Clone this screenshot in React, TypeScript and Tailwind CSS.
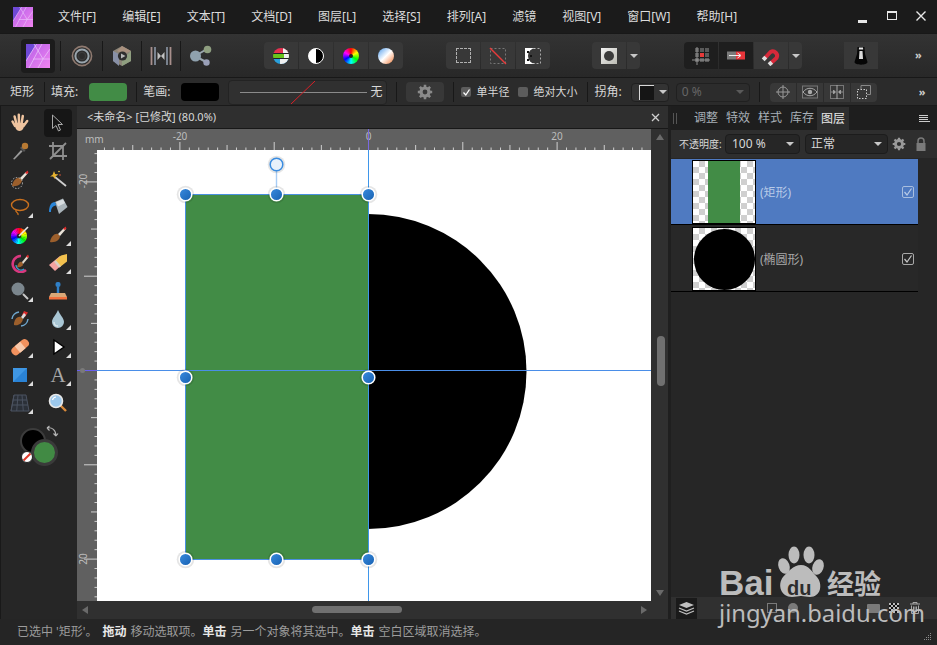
import React from "react";

const Logo = ({ s = 20, id }: { s?: number; id: string }) => (
  <svg width={s} height={s} viewBox="0 0 24 24">
    <defs>
      <linearGradient id={id} x1="0" y1="0" x2="1" y2="1">
        <stop offset="0" stopColor="#b45ee8" />
        <stop offset="1" stopColor="#f184f0" />
      </linearGradient>
    </defs>
    <rect width="24" height="24" fill={`url(#${id})`} />
    <path d="M0 0H10.5L0 17Z" fill="#6f49d6" />
    <path d="M0 17L10.5 0M8 0L17 15M24 15H7M3 24L12 7L16 0M24 5L17 15L12 24" stroke="#e9bdf9" strokeWidth="0.9" fill="none" opacity="0.9" />
  </svg>
);

const Caret = ({ c = "#c8c8c8" }: { c?: string }) => (
  <span className="block h-0 w-0 border-x-[4px] border-t-[4px] border-x-transparent" style={{ borderTopColor: c }} />
);

const Sep = ({ h = "h-[22px]" }: { h?: string }) => <span className={`${h} w-px shrink-0 bg-[#181818]`} />;

const Gear = ({ s = 16, c = "#8a8a8a" }: { s?: number; c?: string }) => (
  <svg width={s} height={s} viewBox="0 0 20 20">
    <circle cx="10" cy="10" r="5" fill="none" stroke={c} strokeWidth="4" />
    <path d="M10 1V19M1 10H19M3.6 3.6L16.4 16.4M16.4 3.6L3.6 16.4" stroke={c} strokeWidth="3.2" strokeDasharray="3.4 11.4" />
  </svg>
);

const Btn = ({ w = "w-[34px]", dark, children }: { w?: string; dark?: boolean; children?: React.ReactNode }) => (
  <div className={`flex h-[27px] ${w} items-center justify-center ${dark ? "bg-[#1e1e1e]" : "bg-[#383838]"}`}>{children}</div>
);

function wedges(cx: number, cy: number, r: number, n = 24) {
  const out: React.ReactNode[] = [];
  for (let i = 0; i < n; i++) {
    const a0 = (i / n) * Math.PI * 2 - Math.PI / 2;
    const a1 = ((i + 1.15) / n) * Math.PI * 2 - Math.PI / 2;
    out.push(
      <path
        key={i}
        d={`M${cx} ${cy}L${cx + r * Math.cos(a0)} ${cy + r * Math.sin(a0)}A${r} ${r} 0 0 1 ${cx + r * Math.cos(a1)} ${cy + r * Math.sin(a1)}Z`}
        fill={`hsl(${(i / n) * 360} 100% 50%)`}
      />
    );
  }
  return out;
}

const I = ({ children }: { children: React.ReactNode }) => (
  <svg width="20" height="20" viewBox="0 0 20 20">
    {children}
  </svg>
);

const brush = (
  <>
    <path d="M2 17C3 11 7 8 10 9L12 11C12 15 7 18 2 17Z" fill="#9c5f2c" />
    <path d="M10 9L16 3L18 4L12 11Z" fill="#e9e2d8" />
    <path d="M15 4L17.5 1.5L18.5 3.5L17 5Z" fill="#e02a2a" />
  </>
);

const tools: { n: React.ReactNode; t?: boolean; sel?: boolean }[] = [
  { n: <I><path d="M5 13L2.5 8.5M6.5 11L4.6 3.5M9 10.5L8.8 1.8M11.5 11L12.8 3M13.5 13L17.2 8" stroke="#efc49f" strokeWidth="2.5" strokeLinecap="round" /><path d="M4.5 10H14L13.5 15C12 19 7 19 5.5 15Z" fill="#efc49f" /></I> },
  { sel: true, n: <I><path d="M4.5 2V15.5L8 12.5L10.5 18L12.5 17L10 11.5H14.5Z" fill="#151515" stroke="#a8a8a8" strokeWidth="1" /></I> },
  { n: <I><path d="M3 18L11 9L12.5 10.5L4.5 18.5Z" fill="#9a9a9a" /><path d="M10 7L14 11L15.5 9.5L11.5 5.5Z" fill="#555" /><circle cx="15" cy="5" r="3.2" fill="#b87a33" /></I> },
  { n: <I><path d="M5 1V15H19M1 5H15V19M2 18L18 2" stroke="#8f8f8f" strokeWidth="1.8" fill="none" /></I> },
  { n: <I>{brush}<circle cx="7" cy="14" r="5.5" fill="none" stroke="#ccc" strokeWidth="0.8" strokeDasharray="1.5 1.5" /></I> },
  { n: <I><path d="M7 8L18 17" stroke="#cfcfcf" strokeWidth="1.8" /><path d="M6 2L7.2 5L10.5 5.5L7.6 7.2L7 10L5 7.6L2 7.5L4.6 5.7Z" fill="#e7b32e" /><circle cx="11" cy="2.5" r="0.8" fill="#f2c94c" /><circle cx="12" cy="6" r="0.8" fill="#e05a3a" /></I> },
  { t: true, n: <I><ellipse cx="10" cy="8" rx="8.5" ry="5.5" fill="none" stroke="#c9701e" strokeWidth="1.4" /><path d="M6 13C5 16 9 15 8 18" fill="none" stroke="#c9701e" strokeWidth="1.4" /></I> },
  { n: <I><path d="M7 5L15 1.5L19.5 10L11 17Z" fill="#a9b3b9" /><path d="M8 5L15 2.5L17 6L10 9.5Z" fill="#d8dde0" /><path d="M7 5C3 5 1 9 1 15L3 15C3 11 5 8.5 8.5 8.5Z" fill="#2a86d8" /></I> },
  { n: <I><g>{wedges(9, 11, 8)}</g><circle cx="9" cy="11" r="2.2" fill="#222" /><path d="M9 11L18 2" stroke="#e8e8e8" strokeWidth="1.6" /></I> },
  { t: true, n: <I>{brush}</I> },
  { n: <I><path d="M11 3A8 8 0 1 0 16 17" fill="none" stroke="#d8387e" strokeWidth="2.6" /><path d="M6 12A5 5 0 0 0 14 16" fill="none" stroke="#3aa0d0" strokeWidth="1.2" /><path d="M7 14C8 10 10 8 12 9L13 11C13 13 10 15 7 14Z" fill="#9c5f2c" /><path d="M12 9L17 3L18.5 4.5L13 11Z" fill="#e2d9cc" /><path d="M16 3.5L18 1.5L19 3.5L18 5Z" fill="#e02a2a" /></I> },
  { t: true, n: <I><path d="M1 12L12 3L17 9L7 18Z" fill="#f3a3a0" /><path d="M7 8L13 2.5L19 1V8.5L12 14Z" fill="#f2c14e" /><path d="M7 8L12 14" stroke="#d8d0c4" strokeWidth="2.5" /></I> },
  { t: true, n: <I><circle cx="8" cy="8" r="6.5" fill="#7b868d" /><path d="M13 13L18 18" stroke="#c9c9c9" strokeWidth="2" /></I> },
  { n: <I><rect x="7.5" y="1" width="5" height="5" rx="2" fill="#2f7fc6" /><rect x="8.8" y="6" width="2.4" height="6" fill="#2f7fc6" /><path d="M3 12H17L19 16H1Z" fill="#d9a878" /><rect x="1" y="16" width="18" height="2.5" fill="#f2703d" /></I> },
  { n: <I><path d="M14 2L18 3.5L15 8L12 6Z" fill="#d92a2a" /><path d="M4 14C5 9 8 7 11 8L13 10C12 15 8 17 4 16Z" fill="#9c5f2c" /><path d="M11 8L14 4L16 6L13 10Z" fill="#ddd" /><path d="M2 10A8 8 0 0 1 9 3M18 10A8 8 0 0 1 11 17" fill="none" stroke="#6fa6cc" strokeWidth="1.5" /></I> },
  { t: true, n: <I><path d="M10 1C12 6 16 9 16 13A6 6 0 0 1 4 13C4 9 8 6 10 1Z" fill="#a9c6d4" /><path d="M6 13C6 16 8 17 10 17" stroke="#dbe8ee" strokeWidth="1.3" fill="none" /></I> },
  { t: true, n: <I><rect x="0" y="6" width="20" height="8.5" rx="4" transform="rotate(-40 10 10)" fill="#f2925e" /><rect x="6.5" y="6" width="7" height="8.5" transform="rotate(-40 10 10)" fill="#f8c9ab" /></I> },
  { t: true, n: <I><path d="M6 3V17L16 10Z" fill="#fff" stroke="#000" strokeWidth="1.4" /></I> },
  { t: true, n: <I><rect x="3" y="3" width="14" height="14" fill="#2a83d6" /><path d="M3 3H17L3 17Z" fill="#3f97e4" /></I> },
  { t: true, n: <span className="font-['Liberation_Serif',serif] text-[21px] leading-none text-[#a8a8a8]">A</span> },
  { t: true, n: <I><path d="M4 2H16L19 18H1Z M4 2L1 18M8 2L6.7 18M12 2L13.3 18M3 7H17M2 12H18" fill="#2b3038" stroke="#4b5260" strokeWidth="1" /></I> },
  { n: <I><path d="M12 12L18 18" stroke="#d98a3a" strokeWidth="2.4" /><circle cx="8" cy="8" r="6.5" fill="#9cc8ec" stroke="#e8e8e8" strokeWidth="1.6" /><path d="M4.5 7A4 4 0 0 1 8 4" stroke="#fff" strokeWidth="1.2" fill="none" /></I> },
];

const Tools = () => (
  <aside className="flex w-[77px] shrink-0 flex-col border-l border-[#191919] bg-[#262626] pl-[5px] pt-[3px]">
    <div className="grid grid-cols-[28px_28px] gap-x-[10px]">
      {tools.map((t, i) => (
        <div key={i} className={`relative flex h-[28px] items-center justify-center rounded-sm ${t.sel ? "bg-[#161616]" : ""}`}>
          {t.n}
          {t.t && <span className="absolute bottom-[3px] right-[1px] h-0 w-0 border-b-[5px] border-l-[5px] border-b-[#dcdcdc] border-l-transparent" />}
        </div>
      ))}
    </div>
    <div className="relative ml-[14px] mt-[11px] h-[46px] w-[46px] self-start">
      <span className="absolute left-0 top-0 h-[26px] w-[26px] rounded-full border-2 border-[#3c3c3c] bg-black" />
      <span className="absolute left-[11px] top-[11px] h-[27px] w-[27px] rounded-full border-[3px] border-[#3a3a3a] bg-[#418a44]" />
      <span className="absolute left-[1px] top-[23px] flex h-[12px] w-[12px] items-center justify-center overflow-hidden rounded-full border border-[#222] bg-white">
        <span className="h-[2px] w-[14px] -rotate-45 bg-[#e0392b]" />
      </span>
      <svg className="absolute left-[25px] top-[-3px]" width="14" height="14" viewBox="0 0 14 14">
        <path d="M2 3C7 2 11 5 11 11M2 3L4.5 1M2 3L4.5 5.5M11 11L8.5 8.5M11 11L13 8.5" fill="none" stroke="#b5b5b5" strokeWidth="1.1" />
      </svg>
    </div>
  </aside>
);

const Canvas = () => {
  const hTicks: React.ReactNode[] = [];
  for (let i = -30; i <= 30; i++) {
    const x = 368.5 + i * 9.43 - 77;
    if (x < 20 || x > 574) continue;
    hTicks.push(<path key={i} d={`M${x} ${21}V${i % 10 === 0 ? 13 : i % 5 === 0 ? 16 : 18.5}`} stroke="#ddd" strokeWidth="0.9" />);
  }
  const vTicks: React.ReactNode[] = [];
  for (let i = -25; i <= 25; i++) {
    const y = 370.5 + i * 9.43 - 129;
    if (y < 21) continue;
    vTicks.push(<path key={i} d={`M20 ${y}H${i % 10 === 0 ? 7 : i % 5 === 0 ? 14 : 17.5}`} stroke="#ddd" strokeWidth="0.9" />);
  }
  const handles = [[108.5, 65.5], [199.5, 65.5], [291.5, 65.5], [108.5, 248.5], [291.5, 248.5], [108.5, 430.5], [199.5, 430.5], [291.5, 430.5]];
  return (
    <svg className="block h-[472px] w-[574px]" viewBox="0 0 574 472">
      <defs>
        <linearGradient id="hd" x1="0" y1="0" x2="1" y2="1">
          <stop offset="0" stopColor="#3a8ce0" />
          <stop offset="1" stopColor="#1660b0" />
        </linearGradient>
      </defs>
      <rect width="574" height="472" fill="#606060" />
      <rect x="20" y="21" width="554" height="451" fill="#fff" />
      {hTicks}
      {vTicks}
      <text x="8" y="14" fontSize="10" fill="#bdbdbd" fontFamily="Noto Sans">mm</text>
      <text x="103" y="11" fontSize="10" fill="#bdbdbd" textAnchor="middle" fontFamily="Noto Sans">-20</text>
      <text x="291.5" y="11" fontSize="10" fill="#bdbdbd" textAnchor="middle" fontFamily="Noto Sans">0</text>
      <text x="480" y="11" fontSize="10" fill="#bdbdbd" textAnchor="middle" fontFamily="Noto Sans">20</text>
      <text transform="translate(10 52) rotate(-90)" fontSize="10" fill="#bdbdbd" textAnchor="middle" fontFamily="Noto Sans">-20</text>
      <text transform="translate(10 430) rotate(-90)" fontSize="10" fill="#bdbdbd" textAnchor="middle" fontFamily="Noto Sans">20</text>
      <path d="M291 85A158.5 157.5 0 0 1 291 400Z" fill="#000" />
      <rect x="108.5" y="65.5" width="183" height="365" fill="#428c46" stroke="#4a90e0" strokeWidth="1" />
      <path d="M291.5 0V472" stroke="#3f96ea" strokeWidth="1" />
      <path d="M291.5 0V21" stroke="#7a6ae0" strokeWidth="1" />
      <path d="M0 241.5H574" stroke="#4a8ee8" strokeWidth="1" />
      <path d="M0 241.5H20" stroke="#6a5ff0" strokeWidth="1" />
      <circle cx="5.5" cy="241.5" r="2.5" fill="#7a7a7a" />
      <path d="M199.5 36V65" stroke="#a8cdf5" strokeWidth="1.4" />
      {handles.map(([x, y], i) => (
        <g key={i}>
          <circle cx={x} cy={y} r="8.8" fill="#000" opacity="0.1" />
          <circle cx={x} cy={y} r="6.3" fill="url(#hd)" stroke="#fff" strokeWidth="1.5" />
        </g>
      ))}
      <circle cx="199.5" cy="35.5" r="8.8" fill="#000" opacity="0.1" />
      <circle cx="199.5" cy="35.5" r="6.3" fill="#e8f1fb" stroke="#3a8ce0" strokeWidth="1.5" />
    </svg>
  );
};

const Menu = ["文件[F]", "编辑[E]", "文本[T]", "文档[D]", "图层[L]", "选择[S]", "排列[A]", "滤镜", "视图[V]", "窗口[W]", "帮助[H]"];

export default function App() {
  return (
    <div className="relative flex h-[645px] w-[937px] flex-col overflow-hidden bg-[#262626] font-['Noto_Sans','Noto_Sans_CJK_SC',sans-serif] text-[12px] text-[#d0d0d0]">
      {/* menu */}
      <header className="flex h-[33px] shrink-0 items-center bg-[#1b1b1b] pl-[13px]">
        <Logo id="lg1" />
        <nav className="ml-[25px] flex gap-[26px] text-[#dcdcdc]">
          {Menu.map((m) => (
            <span key={m}>{m}</span>
          ))}
        </nav>
        <div className="ml-auto flex items-center pr-[11px]">
          <span className="mt-[10px] h-[3px] w-[9px] bg-[#e8e8e8]" />
          <span className="mb-[2px] ml-[20px] h-[9px] w-[10px] border border-t-[2px] border-[#e8e8e8]" />
          <svg width="10" height="10" viewBox="0 0 10 10" className="mb-[2px] ml-[19px]"><path d="M.5.5L9.5 9.5M9.5.5L.5 9.5" stroke="#e8e8e8" strokeWidth="1.4" /></svg>
        </div>
      </header>

      {/* main toolbar */}
      <div className="flex h-[45px] shrink-0 items-center border-y border-[#181818] bg-linear-to-b from-[#333333] to-[#282828] pl-[21px]">
        <div className="flex h-[34px] w-[34px] items-center justify-center rounded-sm bg-[#1c1c1c]"><Logo s={24} id="lg2" /></div>
        <span className="ml-[5px] mr-[10px]"><Sep h="h-[30px] block" /></span>
        <svg width="22" height="22" viewBox="0 0 22 22"><circle cx="11" cy="11" r="9.6" fill="none" stroke="#8f7a70" strokeWidth="1.6" /><circle cx="11" cy="11" r="6.6" fill="none" stroke="#9aa6ae" strokeWidth="2" /><circle cx="11" cy="11" r="3.6" fill="none" stroke="#3c3c3c" strokeWidth="1.4" /></svg>
        <span className="ml-[9px] mr-[8px]"><Sep h="h-[30px] block" /></span>
        <svg width="22" height="22" viewBox="0 0 22 22"><path d="M11 1L20 6V16L11 21L2 16V6Z" fill="#8c8578" /><path d="M11 1L20 6L13 9L6 6Z" fill="#a8907e" /><path d="M2 6L8 9V21L2 16Z" fill="#8890a6" /><path d="M20 6V16L11 21V15Z" fill="#8f9f80" /><circle cx="11.5" cy="11" r="4.6" fill="#2e2e2e" /><path d="M10 8.5L14.5 11L10 13.5Z" fill="#b8b8b8" /></svg>
        <span className="ml-[8px] mr-[8px]"><Sep h="h-[30px] block" /></span>
        <svg width="22" height="22" viewBox="0 0 22 22"><path d="M1.5 2V20" stroke="#a88f8c" strokeWidth="1.8" /><path d="M5 2V20" stroke="#8d98a8" strokeWidth="1.6" /><path d="M20.5 2V20" stroke="#a88f8c" strokeWidth="1.8" /><path d="M17 2V20" stroke="#8d98a8" strokeWidth="1.6" /><path d="M7.5 7L11 11L7.5 15ZM14.5 7L11 11L14.5 15Z" fill="#c2c2c2" /></svg>
        <span className="ml-[8px] mr-[8px]"><Sep h="h-[30px] block" /></span>
        <svg width="24" height="22" viewBox="0 0 24 22"><path d="M6 11L18 4M6 11L17 17" stroke="#9aa5ad" strokeWidth="2" /><circle cx="6.5" cy="11" r="5.5" fill="#8fa1ae" /><circle cx="18.5" cy="4.5" r="3.8" fill="#8f9f80" /><circle cx="17.5" cy="17.5" r="3.2" fill="#9aa0b8" /></svg>

        <div className="ml-[51px] flex gap-px overflow-hidden rounded-sm">
          <Btn>
            <svg width="16" height="16" viewBox="0 0 16 16"><defs><clipPath id="c1"><circle cx="8" cy="8" r="8" /></clipPath></defs><g clipPath="url(#c1)"><rect width="16" height="5" fill="#e6304f" /><rect x="10" width="6" height="5" fill="#f0f0f0" /><rect y="5" width="16" height="1" fill="#222" /><rect y="6" width="16" height="4" fill="#6ac41c" /><rect x="11" y="6" width="5" height="4" fill="#f0f0f0" /><rect y="10" width="16" height="1" fill="#222" /><rect y="11" width="16" height="5" fill="#2aa0dc" /><rect x="7" y="11" width="9" height="5" fill="#f0f0f0" /></g></svg>
          </Btn>
          <Btn><span className="h-[16px] w-[16px] rounded-full border border-white bg-linear-to-r from-white from-50% to-black to-50%" /></Btn>
          <Btn><span className="flex h-[16px] w-[16px] items-center justify-center rounded-full bg-[conic-gradient(#f00,#ff0,#0f0,#0ff,#00f,#f0f,#f00)]"><span className="h-[4px] w-[4px] rounded-full bg-[#222]" /></span></Btn>
          <Btn><span className="h-[16px] w-[16px] rounded-full bg-linear-to-br from-[#4a9ae8] via-white to-[#ea7a30]" /></Btn>
        </div>

        <div className="ml-[43px] flex gap-px overflow-hidden rounded-sm">
          <Btn><span className="h-[15px] w-[15px] border border-dashed border-[#b0b0b0]" /></Btn>
          <Btn><svg width="18" height="18" viewBox="0 0 18 18"><rect x="1.5" y="1.5" width="15" height="15" fill="none" stroke="#777" strokeDasharray="2 2" /><path d="M1 1L17 17" stroke="#e83a3a" strokeWidth="1.5" /></svg></Btn>
          <Btn><svg width="18" height="18" viewBox="0 0 18 18"><rect x="1.5" y="1.5" width="15" height="15" fill="none" stroke="#aaa" strokeDasharray="2 2" /><path d="M1 1H12A8 8 0 0 0 12 17H1Z" fill="#fff" /><path d="M3 4H5V6H3ZM6 8H8V10H6ZM3 12H5V14H3Z" fill="#111" /></svg></Btn>
        </div>

        <div className="ml-[42px] flex gap-px overflow-hidden rounded-sm">
          <Btn><span className="flex h-[16px] w-[16px] items-center justify-center bg-linear-to-br from-[#f2f2f2] to-[#bcbcb4]"><span className="h-[10px] w-[10px] rounded-full bg-[#3a3a3a]" /></span></Btn>
          <Btn w="w-[13px]"><Caret /></Btn>
        </div>

        <div className="ml-[44px] flex gap-px overflow-hidden rounded-sm">
          <Btn dark>
            <svg width="18" height="18" viewBox="0 0 18 18"><g fill="#5a5a5a"><rect x="3" y="1" width="4" height="4" /><rect x="8" y="1" width="4" height="4" /><rect x="13" y="1" width="4" height="4" /><rect x="3" y="6" width="4" height="4" /><rect x="13" y="6" width="4" height="4" /><rect x="3" y="11" width="4" height="4" /><rect x="8" y="11" width="4" height="4" /><rect x="13" y="11" width="4" height="4" /></g><rect x="8" y="6" width="4" height="4" fill="#e83a3a" /><path d="M0 13H18M5 0V18" stroke="#a8a8a8" strokeWidth="0.8" /></svg>
          </Btn>
          <Btn dark>
            <svg width="18" height="9" viewBox="0 0 18 9"><rect x="0" y="0.5" width="9" height="8" fill="#7a7a7a" /><rect x="9" y="0.5" width="9" height="8" fill="#e8353a" /><path d="M2 4.5H13M10.5 2L14 4.5L10.5 7" stroke="#eee" strokeWidth="1" fill="none" /></svg>
          </Btn>
          <Btn>
            <svg width="20" height="20" viewBox="0 0 20 20"><path d="M3.5 12.5L9.5 6A4.4 4.4 0 0 1 15.5 12L9.5 17.5" fill="none" stroke="#d8293a" strokeWidth="4" /><path d="M4.8 11L2.2 13.8M10.8 16.2L8 18.7" stroke="#dedede" strokeWidth="4" /></svg>
          </Btn>
          <Btn w="w-[13px]"><Caret /></Btn>
        </div>

        <div className="ml-[42px]">
          <Btn>
            <svg width="14" height="20" viewBox="0 0 14 20"><path d="M3.5 1H10.5L11 8L13.5 16C13.5 19.5 .5 19.5 .5 16L3 8Z" fill="#060606" /><path d="M5 1.5H9L9.2 3.5H4.8Z" fill="#e8e8e8" /><path d="M5.5 5H8.5L9 13H5Z" fill="#dcdcdc" /></svg>
          </Btn>
        </div>
        <span className="ml-[37px] text-[11px] font-bold text-[#cfcfcf]">»</span>
      </div>

      {/* context bar */}
      <div className="flex h-[28px] shrink-0 items-center border-b border-[#1a1a1a] bg-[#2b2b2b] pl-[10px] pt-px text-[#d8d8d8]">
        <span className="w-[24px]">矩形</span>
        <span className="ml-[10px] mr-[6px]"><Sep h="h-[20px] block" /></span>
        <span>填充:</span>
        <span className="ml-[11px] h-[18px] w-[38px] rounded-sm bg-[#428c46]" />
        <span className="ml-[9px] mr-[6px]"><Sep h="h-[20px] block" /></span>
        <span>笔画:</span>
        <span className="ml-[11px] h-[18px] w-[38px] rounded-sm bg-black" />
        <div className="relative ml-[9px] flex h-[25px] w-[159px] items-center rounded-sm border border-[#232323] bg-[#303030] pl-[11px]">
          <span className="h-px w-[127px] bg-[#8a8a8a]" />
          <span className="ml-[3px]">无</span>
          <svg className="absolute left-[61px] top-0" width="26" height="24" viewBox="0 0 26 24"><path d="M1 23L25 0" stroke="#d81f26" strokeWidth="1" /></svg>
        </div>
        <span className="ml-[9px] mr-[9px]"><Sep h="h-[20px] block" /></span>
        <div className="flex h-[20px] w-[38px] items-center justify-center rounded-sm bg-[#383838]"><Gear /></div>
        <span className="ml-[9px] mr-[7px]"><Sep h="h-[20px] block" /></span>
        <span className="flex h-[10px] w-[10px] items-center justify-center rounded-[2px] bg-[#5c5c5c]">
          <svg width="9" height="9" viewBox="0 0 9 9"><path d="M1.5 4.5L3.8 7L7.5 1.5" stroke="#fff" strokeWidth="1.3" fill="none" /></svg>
        </span>
        <span className="ml-[5px] text-[11px]">单半径</span>
        <span className="ml-[9px] h-[10px] w-[10px] rounded-[2px] bg-[#5c5c5c]" />
        <span className="ml-[5px] text-[11px]">绝对大小</span>
        <span className="ml-[10px] mr-[6px]"><Sep h="h-[20px] block" /></span>
        <span>拐角:</span>
        <div className="ml-[9px] flex h-[19px] w-[38px] items-center rounded-sm border border-[#202020] bg-[#333333] pl-[7px]">
          <span className="h-[15px] w-[15px] border-l border-t border-[#d8d8d8] bg-[#151515]" />
          <span className="ml-[5px] flex"><Caret /></span>
        </div>
        <div className="ml-[7px] flex h-[19px] w-[74px] items-center justify-between rounded-sm border border-[#202020] bg-[#2c2c2c] pl-[5px] pr-[5px] text-[#666]">
          <span>0 %</span>
          <Caret c="#5a5a5a" />
        </div>
        <span className="ml-[9px] mr-[10px]"><Sep h="h-[20px] block" /></span>
        <div className="flex gap-px overflow-hidden rounded-sm">
          <div className="flex h-[19px] w-[26px] items-center justify-center bg-[#383838]"><svg width="16" height="16" viewBox="0 0 16 16"><circle cx="8" cy="8" r="5" fill="none" stroke="#999" /><path d="M8 1V15M1 8H15" stroke="#999" /></svg></div>
          <div className="flex h-[19px] w-[26px] items-center justify-center bg-[#383838]"><svg width="18" height="14" viewBox="0 0 18 14"><rect x="1.5" y="1" width="15" height="12" fill="none" stroke="#777" /><path d="M2 7C6 2 12 2 16 7C12 12 6 12 2 7Z" fill="none" stroke="#aaa" /><circle cx="9" cy="7" r="2.2" fill="#aaa" /></svg></div>
          <div className="flex h-[19px] w-[26px] items-center justify-center bg-[#383838]"><svg width="16" height="16" viewBox="0 0 16 16"><rect x="1.5" y="1.5" width="13" height="13" fill="none" stroke="#777" /><path d="M8 1V15" stroke="#aaa" /><path d="M2 8H6M6.5 8L4.5 6V10ZM14 8H10M9.5 8L11.5 6V10Z" stroke="#aaa" fill="#aaa" strokeWidth=".7" /></svg></div>
          <div className="flex h-[19px] w-[26px] items-center justify-center bg-[#383838]"><svg width="16" height="16" viewBox="0 0 16 16"><rect x="1.5" y="5.5" width="9" height="9" fill="none" stroke="#ccc" strokeDasharray="1.5 1.5" /><path d="M5 5V1.5H14.5V10.5H11" fill="none" stroke="#888" /></svg></div>
        </div>
        <span className="ml-[42px] text-[11px] font-bold text-[#cfcfcf]">»</span>
      </div>

      {/* work area */}
      <div className="flex min-h-0 flex-1">
        <Tools />

        {/* document */}
        <section className="flex w-[591px] shrink-0 flex-col bg-[#1e1e1e]">
          <div className="flex h-[23px] shrink-0 items-center justify-between border-b border-[#181818] bg-[#2f2f2f] pl-[10px] pr-[8px] text-[11px] text-[#d8d8d8]">
            <span>&lt;未命名&gt; [已修改] (80.0%)</span>
            <svg width="9" height="9" viewBox="0 0 9 9"><path d="M1 1L8 8M8 1L1 8" stroke="#cfcfcf" strokeWidth="1.3" /></svg>
          </div>
          <div className="flex min-h-0 flex-1">
            <Canvas />
            <div className="relative flex w-[17px] flex-col items-center justify-between bg-[#303030] py-[5px]">
              <span className="h-0 w-0 border-x-[4px] border-b-[6px] border-x-transparent border-b-[#6a6a6a]" />
              <span className="absolute left-[6px] top-[207px] h-[50px] w-[8px] rounded-full bg-[#707070]" />
              <span className="h-0 w-0 border-x-[4px] border-t-[6px] border-x-transparent border-t-[#6a6a6a]" />
            </div>
          </div>
          <div className="relative flex h-[18px] shrink-0 items-center justify-between bg-[#303030] pl-[5px] pr-[21px]">
            <span className="h-0 w-0 border-y-[4px] border-r-[6px] border-y-transparent border-r-[#6a6a6a]" />
            <span className="absolute left-[235px] top-[5px] h-[7px] w-[90px] rounded-full bg-[#707070]" />
            <span className="h-0 w-0 border-y-[4px] border-l-[6px] border-y-transparent border-l-[#6a6a6a]" />
          </div>
        </section>

        {/* right panel */}
        <aside className="flex min-w-0 flex-1 flex-col border-l-[3px] border-[#1f1f1f] bg-[#262626]">
          <div className="flex h-[24px] shrink-0 items-center bg-[#1e1e1e] pl-[1px] pr-[7px] text-[#a8b0b8]">
            <span className="ml-[1px] h-[11px] w-[4px] border-x border-[#555]" />
            <div className="ml-[17px] flex gap-[8px]">
              <span className="leading-[24px]">调整</span>
              <span className="leading-[24px]">特效</span>
              <span className="leading-[24px]">样式</span>
              <span className="leading-[24px]">库存</span>
            </div>
            <span className="ml-[3px] mt-[1px] h-[23px] w-[32px] bg-[#2e2e2e] text-center leading-[23px] text-[#e8e8e8]">图层</span>
            <span className="ml-auto flex flex-col gap-px">
              <span className="h-px w-[9px] bg-[#ccc]" /><span className="h-px w-[9px] bg-[#ccc]" /><span className="h-px w-[9px] bg-[#ccc]" /><span className="h-px w-[11px] bg-[#ccc]" />
            </span>
          </div>
          <div className="flex h-[28px] shrink-0 items-center bg-[#2e2e2e] pl-[8px] text-[#d8d8d8]">
            <span className="w-[42px] whitespace-nowrap text-[10px]">不透明度:</span>
            <div className="ml-[4px] flex h-[20px] w-[75px] items-center justify-between rounded-sm border border-[#1c1c1c] bg-[#262626] pl-[6px] pr-[5px]">
              <span>100 %</span><Caret />
            </div>
            <div className="ml-[5px] flex h-[20px] w-[83px] items-center justify-between rounded-sm border border-[#1c1c1c] bg-[#262626] pl-[5px] pr-[5px]">
              <span>正常</span><Caret />
            </div>
            <span className="ml-[4px]"><Gear s={14} c="#9a9a9a" /></span>
            <svg className="ml-[9px]" width="12" height="14" viewBox="0 0 12 14"><path d="M3 6V4A3 3 0 0 1 9 4V6" fill="none" stroke="#7a7a7a" strokeWidth="1.5" /><rect x="1.5" y="6" width="9" height="8" fill="#7a7a7a" /></svg>
          </div>
          <div className="flex min-h-0 flex-1 flex-col">
            <div className="w-[247px]">
              <div className="mt-px flex h-[66px] items-center border-b border-black bg-[#4f7ac1] pl-[21px] pr-[4px] pt-px text-[#b9cbe8]">
                <div className="relative h-[64px] w-[64px] border border-black bg-[repeating-conic-gradient(#cfcfcf_0_25%,#fff_0_50%)] bg-[length:12px_12px]">
                  <span className="absolute bottom-0 left-[15px] top-0 w-[32px] bg-[#428c46]" />
                </div>
                <span className="ml-[4px] mt-px">(矩形)</span>
                <span className="ml-auto flex h-[12px] w-[12px] items-center justify-center rounded-[2px] border border-[#a8bedf]">
                  <svg width="10" height="10" viewBox="0 0 10 10"><path d="M1.5 5L4 8L8.5 1.5" stroke="#b9cbe8" strokeWidth="1.2" fill="none" /></svg>
                </span>
              </div>
              <div className="flex h-[67px] items-center border-b border-black bg-[#282828] pl-[21px] pr-[4px] pt-[2px] text-[#a8a8a8]">
                <div className="relative flex h-[64px] w-[64px] items-center justify-center border border-black bg-[repeating-conic-gradient(#cfcfcf_0_25%,#fff_0_50%)] bg-[length:12px_12px]">
                  <span className="h-[61px] w-[61px] rounded-full bg-black" />
                </div>
                <span className="ml-[4px] mt-px">(椭圆形)</span>
                <span className="ml-auto flex h-[12px] w-[12px] items-center justify-center rounded-[2px] border border-[#a8a8a8]">
                  <svg width="10" height="10" viewBox="0 0 10 10"><path d="M1.5 5L4 8L8.5 1.5" stroke="#c8c8c8" strokeWidth="1.2" fill="none" /></svg>
                </span>
              </div>
            </div>
          </div>
          <div className="flex h-[22px] shrink-0 items-center bg-[#303030] pl-[5px]">
            <span className="flex h-[21px] w-[21px] items-center justify-center bg-[#1a1a1a]">
              <svg width="17" height="14" viewBox="0 0 17 14"><path d="M8.5 1L16 4L8.5 7L1 4Z" fill="#c0c0c0" /><path d="M1 7L8.5 10L16 7M1 10L8.5 13L16 10" fill="none" stroke="#c0c0c0" strokeWidth="1.2" /></svg>
            </span>
            <span className="ml-[70px] h-[10px] w-[10px] border border-[#7a7a7a]" />
            <span className="ml-[11px] h-[10px] w-[10px] rounded-full bg-[#7a7a7a]" />
            <span className="ml-[69px] h-[9px] w-[13px] rounded-[1px] bg-[#7a7a7a]" />
            <span className="ml-[9px] h-[10px] w-[10px] bg-[repeating-conic-gradient(#111_0_25%,#bbb_0_50%)] bg-[length:4px_4px]" />
            <svg className="ml-[11px]" width="10" height="12" viewBox="0 0 10 12"><path d="M0 2H10M3 2V.5H7V2M1.5 3.5V11.5H8.5V3.5M3.5 4.5V10M5 4.5V10M6.5 4.5V10" stroke="#a8a8a8" fill="none" /></svg>
          </div>
        </aside>
      </div>

      {/* status */}
      <footer className="flex h-[26px] shrink-0 items-center bg-[#252525] pl-[17px] text-[12px] text-[#9c9c9c]">
        <span>已选中 '矩形'。</span>
        <b className="ml-[5px] font-bold text-[#e8e8e8]">拖动</b>
        <span className="ml-[4px]">移动选取项。</span>
        <b className="font-bold text-[#e8e8e8]">单击</b>
        <span className="ml-[4px]">另一个对象将其选中。</span>
        <b className="font-bold text-[#e8e8e8]">单击</b>
        <span className="ml-[4px]">空白区域取消选择。</span>
      </footer>
      <svg className="absolute bottom-[5px] right-[5px]" width="8" height="8" viewBox="0 0 8 8"><path d="M6 1H7V2H6ZM4 3H5V4H4ZM6 3H7V4H6ZM2 5H3V6H2ZM4 5H5V6H4ZM6 5H7V6H6ZM0 7H1V8H0ZM2 7H3V8H2ZM4 7H5V8H4ZM6 7H7V8H6Z" fill="#8a8a8a" /></svg>

      {/* watermark */}
      <div className="pointer-events-none absolute left-[718px] top-[544px] h-[84px] w-[170px] text-[#bcbcbc]">
        <span className="absolute left-[1px] top-[25px] font-['Liberation_Sans',sans-serif] text-[35px] font-bold leading-[28px]">Bai</span>
        <svg className="absolute left-[56px] top-0" width="52" height="56" viewBox="0 0 52 56">
          <ellipse cx="20" cy="11" rx="5.5" ry="8.5" fill="#bcbcbc" />
          <ellipse cx="35" cy="11" rx="5.5" ry="8.5" fill="#bcbcbc" />
          <ellipse cx="10" cy="22" rx="5.5" ry="8" fill="#bcbcbc" transform="rotate(-20 10 22)" />
          <ellipse cx="44" cy="23" rx="5.5" ry="8" fill="#bcbcbc" transform="rotate(20 44 23)" />
          <path d="M27 21C35 21 38 28 43 33C49 40 47 53 36 53C32 53 30 52 27 52C24 52 22 53 18 53C7 53 3 41 9 33C14 28 19 21 27 21Z" fill="#bcbcbc" />
        </svg>
        <span className="absolute left-[69px] top-[36px] font-['Liberation_Sans',sans-serif] text-[20px] font-bold leading-[16px] text-[#2c2c2c]">du</span>
        <span className="absolute left-[109px] top-[26px] text-[27px] font-bold leading-[28px]">经验</span>
        <span className="absolute left-[1px] top-[58px] whitespace-nowrap text-[23.8px] leading-[22px]">jingyan.baidu.com</span>
      </div>
    </div>
  );
}
